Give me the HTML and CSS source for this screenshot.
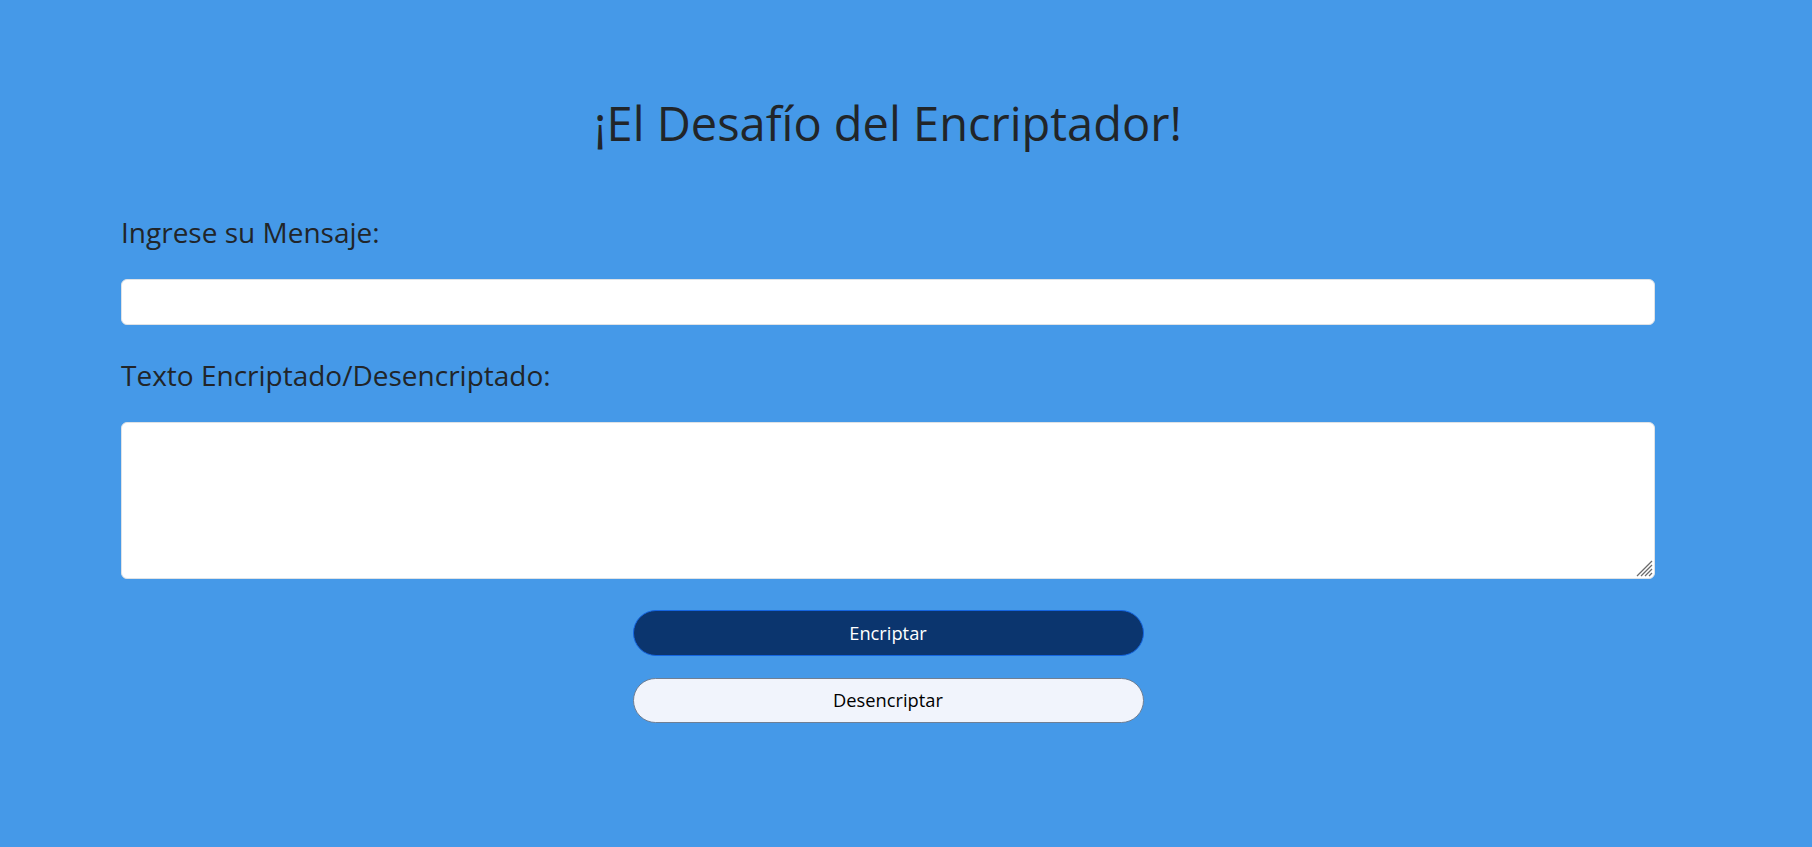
FILE: index.html
```html
<!DOCTYPE html>
<html lang="es">
<head>
<meta charset="utf-8">
<title>Encriptador</title>
<link rel="stylesheet" href="styles.css">
</head>
<body>
<main class="page">
  <h1 class="title">¡El Desafío del Encriptador!</h1>
  <label class="label label-first" for="mensaje">Ingrese su Mensaje:</label>
  <input class="field" id="mensaje" type="text">
  <label class="label label-second" for="resultado">Texto Encriptado/Desencriptado:</label>
  <div class="area-wrap">
    <textarea class="area" id="resultado"></textarea>
    <svg class="grip" width="18" height="18" viewBox="0 0 18 18" aria-hidden="true">
      <path d="M2 17 L17 2 M6 17 L17 6 M10 17 L17 10 M14 17 L17 14" stroke="#6b6b6b" stroke-width="1.3" fill="none"/>
    </svg>
  </div>
  <div class="actions">
    <button class="btn btn-primary" type="button">Encriptar</button>
    <button class="btn btn-light" type="button">Desencriptar</button>
  </div>
</main>
</body>
</html>
```

FILE: styles.css
```css
html, body {
  margin: 0;
  padding: 0;
}

body {
  background: #4599e8;
  color: #212529;
  font-family: "Open Sans", "Noto Sans", sans-serif;
  height: 847px;
  overflow: hidden;
}

.page {
  box-sizing: border-box;
  width: 1655px;
  padding: 100px 0 0 121px;
  display: flex;
  flex-direction: column;
}

.title {
  margin: 0;
  font-size: 47px;
  line-height: 47px;
  font-weight: 400;
  text-align: center;
}

.label {
  display: block;
  font-size: 28px;
  line-height: 28px;
}

.label-first {
  margin-top: 71px;
}

.label-second {
  margin-top: 36px;
}

.field,
.area {
  box-sizing: border-box;
  display: block;
  width: 100%;
  margin: 0;
  background: #ffffff;
  border: 1px solid #dee2e6;
  border-radius: 6px;
  font-family: inherit;
  font-size: 16px;
  padding: 6px 12px;
  color: #212529;
}

.field {
  height: 46px;
  margin-top: 33px;
}

.area-wrap {
  position: relative;
  margin-top: 33px;
}

.area {
  height: 157px;
  resize: none;
}

.grip {
  position: absolute;
  right: 2px;
  bottom: 2px;
  pointer-events: none;
}

.actions {
  margin-top: 31px;
  display: flex;
  flex-direction: column;
  align-items: center;
  gap: 22px;
}

.btn {
  box-sizing: border-box;
  width: 511px;
  height: 46px;
  border-radius: 23px;
  font-family: inherit;
  font-size: 18.3px;
  line-height: 1;
  display: flex;
  align-items: center;
  justify-content: center;
  padding: 0;
  cursor: pointer;
}

.btn-primary {
  background: #0b356e;
  border: 1px solid #1565e0;
  color: #ffffff;
}

.btn-light {
  background: #f1f4fc;
  border: 1px solid #6f7f94;
  color: #000000;
  height: 45px;
}
```
